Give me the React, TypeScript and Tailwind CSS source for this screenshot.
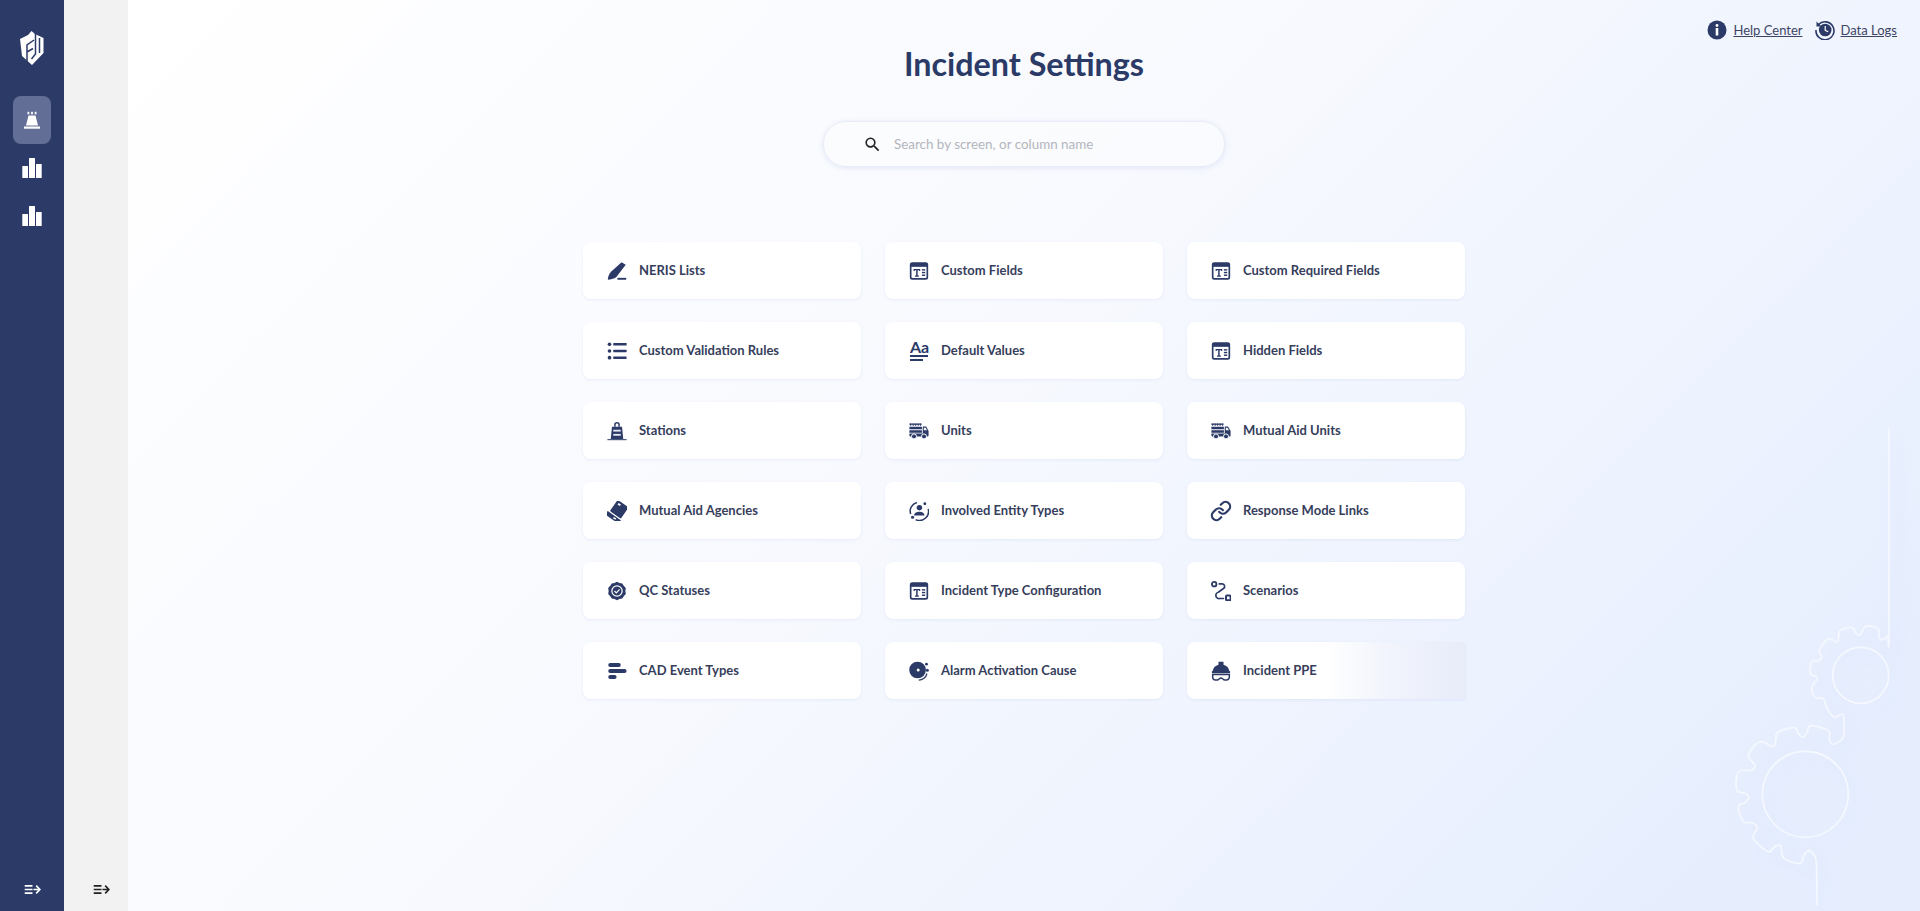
import React from "react";

const C = "#2b3a67";

function Ico({ children }: { children: React.ReactNode }) {
  return (
    <svg viewBox="0 0 24 24" className="h-5 w-5" fill={C} stroke="none">
      {children}
    </svg>
  );
}

const Table = () => (
  <Ico>
    <rect x="2" y="2.500" width="20" height="19" rx="2" fill="none" stroke={C} strokeWidth="2" />
    <rect x="2" y="2.500" width="20" height="4.500" fill={C} />
    <path d="M5.500 9.500h8v2.600h-1.400v-1.100H10.400v6.400h1.400V19H7.200v-1.600h1.400V11H6.900v1.100H5.500z" />
    <rect x="15.500" y="9.800" width="4" height="1.700" />
    <rect x="15.500" y="13" width="4" height="1.700" />
    <rect x="15.500" y="16.200" width="4" height="1.700" />
  </Ico>
);

const Truck = () => (
  <Ico>
    <rect x="0.500" y="3" width="14.500" height="1.600" />
    <path d="M2 3v3M5 3v3M8 3v3M11 3v3M14 3v3" stroke={C} strokeWidth="1" />
    <path d="M0.500 7h15v3h-15zM0.500 11h15v3h-15z" />
    <path d="M0.500 15h16V6.500h4l3 5.500v5.500a1 1 0 0 1-1 1H1.500a1 1 0 0 1-1-1z" />
    <path d="M17.800 8h2l1.800 3.200h-3.800z" fill="#fff" />
    <circle cx="6" cy="18.500" r="3" fill={C} stroke="#fff" strokeWidth="1.200" />
    <circle cx="18" cy="18.500" r="3" fill={C} stroke="#fff" strokeWidth="1.200" />
  </Ico>
);

const Pen = () => (
  <Ico>
    <path d="M17.500 1.500 22.500 4.500 11 19.500C8.500 21.300 4 22.500 1 22.500 1 19 2.500 15 4.800 12.800z" />
    <rect x="12.500" y="20.200" width="10.500" height="2.300" />
  </Ico>
);

const ListI = () => (
  <Ico>
    <circle cx="3" cy="4" r="2.200" />
    <circle cx="3" cy="12" r="2.200" />
    <circle cx="3" cy="20" r="2.200" />
    <rect x="7.500" y="2.500" width="16" height="3" rx="0.500" />
    <rect x="7.500" y="10.500" width="16" height="3" rx="0.500" />
    <rect x="7.500" y="18.500" width="16" height="3" rx="0.500" />
  </Ico>
);

const Station = () => (
  <Ico>
    <path d="M9.500 7V4.500a2.500 2.500 0 0 1 5 0V7" fill="none" stroke={C} strokeWidth="1.800" />
    <path d="M6 7h12l1.500 14.500h-15z" />
    <rect x="7.500" y="10.500" width="9" height="2.200" fill="#e6e9f3" />
    <rect x="7.500" y="15.500" width="9" height="2.200" fill="#e6e9f3" />
    <rect x="0.500" y="21.800" width="23" height="1.200" />
  </Ico>
);

const Defaults = () => (
  <div className="flex w-[18px] flex-col">
    <span className="text-[16px] font-bold leading-[12px] text-[#2b3a67]">Aa</span>
    <span className="mt-[2px] h-[2px] w-[18px] bg-[#2b3a67]" />
    <span className="mt-[2px] h-[2px] w-[13px] bg-[#2b3a67]" />
  </div>
);

const Agency = () => (
  <Ico>
    <g transform="rotate(35 12 12)">
      <rect x="5" y="0.500" width="16" height="16.500" rx="1.500" />
      <rect x="8" y="3" width="3.500" height="2.200" fill="#fff" />
      <rect x="2.500" y="18.500" width="20" height="5" rx="1" />
      <rect x="13" y="20" width="3.500" height="1.800" fill="#fff" />
    </g>
  </Ico>
);

const Entity = () => (
  <Ico>
    <path d="M9.500 1.800A10.600 10.600 0 0 0 2 15.500" fill="none" stroke={C} strokeWidth="1.800" />
    <path d="M23 9.500A10.800 10.800 0 0 1 8 22.300" fill="none" stroke={C} strokeWidth="1.800" />
    <circle cx="12.500" cy="8" r="3.300" />
    <path d="M6 17.300c0-3 2.800-4.500 6.500-4.500s6 1.500 6 4.500z" />
    <circle cx="19" cy="3.300" r="1.700" />
    <circle cx="4.300" cy="19.500" r="1.900" />
  </Ico>
);

const LinkI = () => (
  <svg viewBox="0 0 24 24" className="h-[22px] w-[22px]" fill="none" stroke={C} strokeWidth="2.400" strokeLinecap="round" strokeLinejoin="round">
    <path d="M10 13a5 5 0 0 0 7.540.54l3-3a5 5 0 0 0-7.070-7.070l-1.720 1.710" />
    <path d="M14 11a5 5 0 0 0-7.540-.54l-3 3a5 5 0 0 0 7.070 7.070l1.710-1.710" />
  </svg>
);

const QC = () => (
  <Ico>
    <path d="M12 1l3 1.500 3.300.400 1.800 2.700 2.500 2.700-.600 3.700.600 3.700-2.500 2.700-1.800 2.700-3.300.400-3 1.500-3-1.500-3.300-.400-1.800-2.700-2.500-2.700.600-3.700-.600-3.700 2.500-2.700 1.800-2.700L9 2.500z" />
    <circle cx="12" cy="12" r="6.200" fill="none" stroke="#fff" strokeWidth="1.500" />
    <path d="M9 12l2.200 2.200 3.900-4.200" fill="none" stroke="#fff" strokeWidth="1.500" />
  </Ico>
);

const Scen = () => (
  <svg viewBox="0 0 24 24" className="h-5 w-5" fill="none" stroke={C} strokeWidth="2">
    <circle cx="3.800" cy="3.800" r="2.700" strokeWidth="2.200" />
    <rect x="18" y="17.500" width="5.500" height="5.500" rx="1.200" strokeWidth="2.400" />
    <path d="M10 3.500h3.500a3 3 0 0 1 1.500 5.500L8.800 13.500a3.800 3.800 0 0 0 1.700 7.500h4.500" strokeLinecap="round" />
  </svg>
);

const Cad = () => (
  <Ico>
    <rect x="1.500" y="2.500" width="15" height="4.800" rx="2.400" />
    <rect x="1.500" y="9.500" width="22" height="4.800" rx="2.400" />
    <rect x="1.500" y="16.700" width="10" height="4.800" rx="2.400" />
  </Ico>
);

const Alarm = () => (
  <Ico>
    <circle cx="10.300" cy="10.800" r="10" />
    <circle cx="11" cy="10.800" r="1.800" fill="#fff" />
    <circle cx="21" cy="3.800" r="1.700" />
    <circle cx="22" cy="11" r="1.800" />
    <path d="M21.500 15c-1 4.500-5 8-9.800 8" fill="none" stroke={C} strokeWidth="1.500" />
  </Ico>
);

const Ppe = () => (
  <Ico>
    <path d="M9 1h6v3.500c4 1 6.500 4 7 7.800H2c.5-3.800 3-6.800 7-7.800z" />
    <rect x="1" y="12" width="22" height="2.800" rx="1" />
    <path d="M2 16.300h20v3a3.500 3.500 0 0 1-3.500 3.500h-2c-2 0-2.500-2.500-4.500-2.500S9.500 22.800 7.500 22.800h-2A3.500 3.500 0 0 1 2 19.300z" fill="none" stroke={C} strokeWidth="1.800" />
  </Ico>
);

const Bars = () => (
  <svg viewBox="0 0 20 20" className="h-5 w-5" fill="#fff">
    <rect x="0.300" y="8" width="5.700" height="12" rx="0.500" />
    <rect x="7" y="0" width="6" height="20" rx="0.500" />
    <rect x="14" y="6" width="5.700" height="14" rx="0.500" />
  </svg>
);

const Collapse = ({ color }: { color: string }) => (
  <svg viewBox="0 0 18 12" className="h-[11px] w-[17px]" fill="none" stroke={color} strokeWidth="1.800">
    <path d="M0.500 2h8.500M0.500 6h8.500M0.500 10h8.500" />
    <path d="M10 6h7M13 1.800 17 6l-4 4.200" />
  </svg>
);

function smooth(p: number[][]) {
  let d = `M${p[0][0]} ${p[0][1]}`;
  for (let i = 0; i < p.length - 1; i++) {
    const a = p[Math.max(i - 1, 0)];
    const b = p[i];
    const c = p[i + 1];
    const e = p[Math.min(i + 2, p.length - 1)];
    const c1 = [b[0] + (c[0] - a[0]) / 6, b[1] + (c[1] - a[1]) / 6];
    const c2 = [c[0] - (e[0] - b[0]) / 6, c[1] - (e[1] - b[1]) / 6];
    d += `C${c1[0]} ${c1[1]} ${c2[0]} ${c2[1]} ${c[0]} ${c[1]}`;
  }
  return d;
}

const gearPts = [
  [627, -515], [627, 90], [622, 108], [605, 120], [597, 110], [595, 88], [570, 78], [553, 82], [540, 105], [528, 100], [515, 82],
  [480, 92], [476, 112], [470, 126], [445, 116], [418, 150], [425, 170], [415, 182], [396, 184], [391, 220], [412, 235], [395, 262], [405, 292],
  [430, 296], [440, 322], [462, 352], [485, 342], [491, 355], [491, 408], [478, 425], [458, 433], [448, 420], [445, 392],
  [392, 377], [380, 400], [368, 412], [355, 400], [342, 382], [292, 398], [288, 420], [278, 440], [240, 425], [205, 465], [225, 495], [215, 510], [175, 516],
  [170, 570], [195, 580], [207, 592], [195, 608], [175, 620], [190, 665], [215, 668], [232, 682], [220, 715], [265, 755], [285, 738], [302, 738], [312, 775],
  [360, 790], [372, 765], [385, 752], [402, 765], [409, 790], [411, 915],
];

function Gears() {
  return (
    <svg
      viewBox="0 -540 720 1473"
      className="pointer-events-none absolute bottom-0 right-0 h-[491px] w-[240px] drop-shadow-[8px_10px_8px_rgba(170,185,235,0.3)]"
      fill="none"
      stroke="#f6f8ff"
      strokeWidth="5"
      strokeLinecap="round"
    >
      <path d={smooth(gearPts)} />
      <circle cx="542" cy="226" r="84" />
      <circle cx="376" cy="583" r="129" />
    </svg>
  );
}

const items: [string, React.ReactNode][] = [
  ["NERIS Lists", <Pen />],
  ["Custom Fields", <Table />],
  ["Custom Required Fields", <Table />],
  ["Custom Validation Rules", <ListI />],
  ["Default Values", <Defaults />],
  ["Hidden Fields", <Table />],
  ["Stations", <Station />],
  ["Units", <Truck />],
  ["Mutual Aid Units", <Truck />],
  ["Mutual Aid Agencies", <Agency />],
  ["Involved Entity Types", <Entity />],
  ["Response Mode Links", <LinkI />],
  ["QC Statuses", <QC />],
  ["Incident Type Configuration", <Table />],
  ["Scenarios", <Scen />],
  ["CAD Event Types", <Cad />],
  ["Alarm Activation Cause", <Alarm />],
  ["Incident PPE", <Ppe />],
];

export default function App() {
  return (
    <div className="flex h-[911px] w-full overflow-hidden font-['Lato',sans-serif]">
      <aside className="flex w-16 shrink-0 flex-col items-center bg-[#2b3a67]">
        <div className="flex h-24 w-full items-center justify-center">
          <svg viewBox="0 0 24 34" className="h-[34px] w-6">
            <path d="M11.500 0 15 3 23.500 7 23.500 22 12 34 2 25 0 8 8 4z" fill="#fff" />
            <path d="M7 33V14L14 9M7 21l6-3.500M15.500 2v21l-4 5M19.500 7v15" stroke="#2b3a67" strokeWidth="1.500" fill="none" />
          </svg>
        </div>
        <div className="flex h-12 w-[38px] items-center justify-center rounded-lg bg-[#636e96]">
          <svg viewBox="0 0 20 20" className="h-5 w-5" fill="#fff">
            <path d="M6.500 5.500h7l2.500 10H4z" />
            <rect x="2" y="16.500" width="16" height="2.200" />
            <rect x="5.500" y="1.800" width="1.800" height="2.500" />
            <rect x="9.100" y="1.800" width="1.800" height="2.500" />
            <rect x="12.700" y="1.800" width="1.800" height="2.500" />
          </svg>
        </div>
        <div className="flex h-12 items-center justify-center"><Bars /></div>
        <div className="flex h-12 items-center justify-center"><Bars /></div>
        <div className="mt-auto flex h-[27px] items-start justify-center"><Collapse color="#fff" /></div>
      </aside>

      <aside className="flex w-16 shrink-0 flex-col items-end bg-[#f2f2f2] pr-[18px]">
        <div className="mt-auto flex h-[27px] items-start"><Collapse color="#222" /></div>
      </aside>

      <main className="relative flex flex-1 flex-col bg-[linear-gradient(135deg,#ffffff_0%,#f7f9fe_45%,#e6eefe_92%)]">
        <Gears />
        <header className="relative grid grid-cols-[1fr_auto_1fr] pl-[23px] pr-[23px] pt-[20px]">
          <div />
          <h1 className="mt-[24px] text-[32.3px] font-bold leading-[40px] text-[#2b3a67]">Incident Settings</h1>
          <div className="flex items-start justify-end gap-[12px] text-[13px] leading-5 text-[#3d4566]">
            <a className="flex items-center gap-[6px]">
              <svg viewBox="0 0 20 20" className="h-5 w-5">
                <circle cx="10" cy="10" r="9.500" fill={C} />
                <circle cx="10" cy="5.500" r="1.400" fill="#fff" />
                <rect x="8.700" y="8" width="2.600" height="7.500" fill="#fff" />
              </svg>
              <span className="underline">Help Center</span>
            </a>
            <a className="flex items-center gap-[6px]">
              <svg viewBox="0 0 20 20" className="h-5 w-5" fill="none">
                <path d="M3.500 4.500A9 9 0 1 1 1 10" stroke={C} strokeWidth="1.600" />
                <path d="M1.500 1.500v5h5z" fill={C} />
                <circle cx="10.200" cy="10" r="6.300" fill={C} />
                <path d="M10.200 6v4.300l3 1.500" stroke="#fff" strokeWidth="1.200" />
              </svg>
              <span className="underline">Data Logs</span>
            </a>
          </div>
        </header>

        <div className="relative mx-auto mt-[37px] flex h-[46px] w-[402px] items-center rounded-full border border-[#e9ecf8] bg-white/40 pl-[39px] shadow-[0_1px_5px_rgba(170,185,230,0.3)]">
          <svg viewBox="0 0 24 24" className="h-[19px] w-[19px]" fill="#222">
            <path d="M15.500 14h-.79l-.28-.27A6.470 6.470 0 0 0 16 9.500 6.500 6.500 0 1 0 9.500 16c1.610 0 3.090-.59 4.230-1.570l.27.28v.79l5 4.990L20.490 19l-4.990-5zm-6 0C7.010 14 5 11.990 5 9.500S7.010 5 9.500 5 14 7.010 14 9.500 11.990 14 9.500 14z" />
          </svg>
          <span className="ml-[12px] text-[13.4px] text-[#b4b5bd]">Search by screen, or column name</span>
        </div>

        <div className="relative mx-auto mt-[75px] grid w-[882px] grid-cols-3 gap-x-[24px] gap-y-[23px]">
          {items.map(([label, icon]) => (
            <div
              key={label}
              className={`flex h-[57px] items-center gap-2 pl-5 shadow-[0_1px_3px_rgba(170,185,230,0.2)] ${
                label === "Incident PPE"
                  ? "rounded-l-lg bg-[linear-gradient(90deg,#ffffff_50%,#f1f4fc_72%,#e8ecf9_100%)]"
                  : "rounded-lg bg-white"
              }`}
            >
              <span className="flex w-7 justify-center">{icon}</span>
              <span className="text-[13px] font-bold text-[#363e5c]">{label}</span>
            </div>
          ))}
        </div>
      </main>
    </div>
  );
}
